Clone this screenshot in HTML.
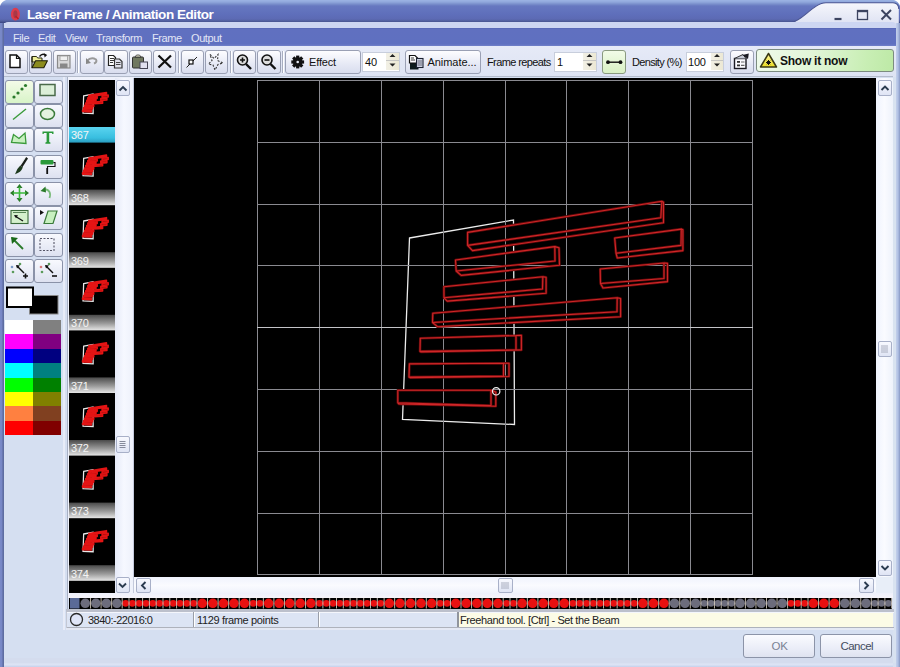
<!DOCTYPE html>
<html><head><meta charset="utf-8">
<style>
*{box-sizing:border-box;margin:0;padding:0}
html,body{width:900px;height:667px;overflow:hidden;background:#d5dff1;font-family:"Liberation Sans",sans-serif;font-size:11px;color:#000}
.a{position:absolute}
.txt{letter-spacing:-0.4px;white-space:nowrap}
.btn{position:absolute;border:1px solid #9aa0b4;border-radius:3px;background:linear-gradient(#fdfdff,#e6e9f5 60%,#d9ddee)}
.sb{position:absolute;border:1px solid #a8b0c8;border-radius:2px;background:linear-gradient(#f8f9ff,#dfe4f4)}
</style></head><body>
<!-- window frame -->
<div class="a" style="left:0;top:0;width:4px;height:667px;background:linear-gradient(90deg,#7a8ac8 0,#7686c6 2px,#5c6a9c 3px,#6070a8 4px)"></div>
<div class="a" style="left:896px;top:22px;width:4px;height:645px;background:linear-gradient(90deg,#c4d0ea 0,#b0c0e4 2px,#8898c4 4px)"></div>
<div class="a" style="left:4px;top:658px;width:889px;height:9px;background:linear-gradient(#d4dcee 0,#d4dcee 5px,#dfe6f6 6px,#d0daf0 8px,#c4cfea 9px)"></div>

<!-- title bar -->
<div class="a" style="left:0;top:0;width:900px;height:23px;background:linear-gradient(#9cb4e4 0,#90a8dc 2px,#7a90cc 4px,#6678c0 6px,#5f6fbb 14px,#5c6ab4 19px,#52609e 21px,#3e4a88 22.5px)"></div>
<svg class="a" style="left:0;top:0" width="900" height="30">
<path d="M0 0 H6 Q1.5 1.5 0 6 Z" fill="#fff"/>
<path d="M894 0 H900 V6 Q898.5 1.5 894 0 Z" fill="#fff"/>
<defs><linearGradient id="tl" x1="0" y1="0" x2="0" y2="1"><stop offset="0" stop-color="#f6f7fc"/><stop offset="1" stop-color="#dfe3f3"/></linearGradient></defs>
<path d="M786 23 L792 22.5 C802 21, 814 2.8, 826 2.8 L893 2.8 Q898.5 3 898.8 9 L898.8 23 Z" fill="url(#tl)"/>
<path d="M786 22.5 L792 22.3 C802 21, 814 2.8, 826 2.8 L893 2.8 Q898.5 3 898.8 9" fill="none" stroke="#4a5592" stroke-width="1.1"/>
<path d="M834.5 19 h7" stroke="#3c4460" stroke-width="2.2"/>
<rect x="857.5" y="10.5" width="10" height="9" fill="none" stroke="#3c4460" stroke-width="1.3"/><path d="M857 11.2h11" stroke="#3c4460" stroke-width="2"/>
<path d="M881.5 10 L891 19.5 M891 10 L881.5 19.5" stroke="#3c4460" stroke-width="2"/>
</svg>
<div class="a txt" style="left:27px;top:7px;font-weight:bold;font-size:13.5px;letter-spacing:-0.45px;color:#fff">Laser Frame / Animation Editor</div>
<svg class="a" style="left:0;top:0" width="30" height="24"><ellipse cx="15.4" cy="14.2" rx="3.3" ry="5.2" fill="#a83848" stroke="#dc3c4c" stroke-width="2.4"/><path d="M15.5 16 l3 3" stroke="#c02020" stroke-width="1.5"/></svg>

<!-- light strip & menu -->
<div class="a" style="left:4px;top:22px;width:892px;height:6px;background:#cdd6f2;border-radius:4px 4px 0 0"></div>
<div class="a" style="left:4px;top:28px;width:892px;height:18px;background:linear-gradient(#5262b0 0,#6070c0 1px,#5f70c0 16px,#7080c8 18px)"></div>
<div class="a txt" style="left:13px;top:32px;color:#e2e6f6">File</div>
<div class="a txt" style="left:38px;top:32px;color:#e2e6f6">Edit</div>
<div class="a txt" style="left:65px;top:32px;color:#e2e6f6">View</div>
<div class="a txt" style="left:96px;top:32px;color:#e2e6f6">Transform</div>
<div class="a txt" style="left:152px;top:32px;color:#e2e6f6">Frame</div>
<div class="a txt" style="left:191px;top:32px;color:#e2e6f6">Output</div>

<!-- toolbar -->
<div class="a" style="left:4px;top:46px;width:892px;height:31px;background:linear-gradient(#e6eaf7,#dde3f3)"></div>


<!-- toolbar buttons -->
<div class="btn" style="left:5px;top:50px;width:23px;height:24px"></div>
<div class="btn" style="left:29px;top:50px;width:23px;height:24px"></div>
<div class="btn" style="left:53px;top:50px;width:23px;height:24px"></div>
<div class="a" style="left:77px;top:51px;width:2px;height:22px;border-left:1px solid #a8aec0;border-right:1px solid #fff"></div>
<div class="btn" style="left:80px;top:50px;width:24px;height:24px"></div>
<div class="btn" style="left:104px;top:50px;width:24px;height:24px"></div>
<div class="btn" style="left:129px;top:50px;width:23px;height:24px"></div>
<div class="btn" style="left:153px;top:50px;width:23px;height:24px"></div>
<div class="a" style="left:178px;top:51px;width:2px;height:22px;border-left:1px solid #a8aec0;border-right:1px solid #fff"></div>
<div class="btn" style="left:181px;top:50px;width:23px;height:24px"></div>
<div class="btn" style="left:205px;top:50px;width:23px;height:24px"></div>
<div class="a" style="left:230px;top:51px;width:2px;height:22px;border-left:1px solid #a8aec0;border-right:1px solid #fff"></div>
<div class="btn" style="left:233px;top:50px;width:23px;height:24px"></div>
<div class="btn" style="left:257px;top:50px;width:24px;height:24px"></div>
<div class="a" style="left:282px;top:51px;width:2px;height:22px;border-left:1px solid #a8aec0;border-right:1px solid #fff"></div>
<div class="btn" style="left:285px;top:50px;width:76px;height:24px"></div>
<svg class="a" style="left:0;top:46px" width="900" height="31">
<!-- new doc -->
<path d="M10 9 h6.5 l3.5 3.5 v9 h-10 z" fill="#fff" stroke="#111" stroke-width="1.5"/>
<path d="M16.5 9 v3.5 h3.5" fill="none" stroke="#111" stroke-width="1.2"/>
<!-- open folder -->
<path d="M32 10.5 h4.5 l1.2 1.5 h4.3 v4 h-10z" fill="#eeee98" stroke="#2a2a10" stroke-width="1"/>
<path d="M32 21.8 l3.6 -7 h11.8 l-3.6 7 z" fill="#8c8c1c" stroke="#1e1e08" stroke-width="1.1" stroke-linejoin="round"/>
<path d="M32 10.5 v11.3" stroke="#1e1e08" stroke-width="1.1"/>
<path d="M39.5 10.5 q2.5 -3.5 6 -1.5" fill="none" stroke="#111" stroke-width="1.3"/><path d="M44 7.2 l3.2 1.8 l-2.6 2.6z" fill="#111"/>
<!-- save grayed -->
<rect x="57.5" y="9.5" width="12.5" height="12.5" fill="#d8d8d8" stroke="#8a8a8a" stroke-width="1.2"/>
<rect x="60" y="10" width="7.5" height="4.5" fill="#f0f0f0" stroke="#999" stroke-width="0.8"/>
<rect x="60" y="17.5" width="7.5" height="4.5" fill="#888"/>
<!-- undo grayed -->
<path d="M87 15 q4 -4.5 9 -1.5 q1.5 2.5 -2 4" fill="none" stroke="#999" stroke-width="2"/><path d="M86 12 l0 6 l5 -1 z" fill="#888"/>
<!-- copy -->
<path d="M108.5 9.5 h5 l2 2 v8 h-7z" fill="#fff" stroke="#222" stroke-width="1.2"/>
<path d="M110 12.5h4M110 14.5h4M110 16.5h3" stroke="#222" stroke-width="0.9"/>
<path d="M114.5 13 h5 l2.5 2.5 v6.5 h-7.5z" fill="#dfe0ea" stroke="#333" stroke-width="1.2"/>
<path d="M116 16.5h4.5M116 18.5h4.5" stroke="#333" stroke-width="0.9"/>
<!-- paste -->
<rect x="132.5" y="11" width="11" height="11" rx="1" fill="#707860" stroke="#333" stroke-width="1"/>
<path d="M135 11 l1.5 -2 h3 l1.5 2z" fill="#e8e8d0" stroke="#333" stroke-width="0.8"/>
<rect x="140" y="16" width="7.5" height="6.5" fill="#e0e0f0" stroke="#445" stroke-width="1"/>
<!-- X -->
<path d="M158.5 9.5 L171 21.5 M171 9.5 L158.5 21.5" stroke="#111" stroke-width="2.2"/>
<!-- node -->
<path d="M186.5 21.5 L197 11" stroke="#222" stroke-width="1"/>
<rect x="189" y="14" width="4" height="4" fill="#fff" stroke="#111" stroke-width="1.2"/>
<!-- star dashed -->
<path d="M210 8.5 l4 4 l4 -4 l-0.5 6 l5.5 2.5 l-5 1.5 l-3 5.5 l-2 -5 l-4.5 -1 l3.5 -3.5 z" fill="none" stroke="#333" stroke-width="1.1" stroke-dasharray="2 1.5"/>
<!-- zoom + -->
<circle cx="242.5" cy="14" r="5" fill="#ddd" stroke="#111" stroke-width="1.6"/>
<path d="M240 14h5M242.5 11.5v5" stroke="#111" stroke-width="1.6"/>
<path d="M246 18 l5 5" stroke="#111" stroke-width="2.4"/>
<!-- zoom - -->
<circle cx="267" cy="14" r="5" fill="#ddd" stroke="#111" stroke-width="1.6"/>
<path d="M264.5 14h5" stroke="#111" stroke-width="1.6"/>
<path d="M270.5 18 l5 5" stroke="#111" stroke-width="2.4"/>
</svg>


<!-- toolbar part 2 -->
<div class="a txt" style="left:309px;top:56px;font-size:11px;letter-spacing:-0.15px;color:#111">Effect</div>
<div class="a" style="left:362px;top:52px;width:38px;height:20px;background:#fff;border:1px solid #c8cedc"></div>
<div class="a txt" style="left:365px;top:56px;font-size:11px;letter-spacing:0;color:#111">40</div>
<div class="a" style="left:386px;top:53px;width:13px;height:17px;background:linear-gradient(90deg,#f2f0e6,#ece8d4)"></div>
<div class="btn" style="left:405px;top:50px;width:76px;height:24px"></div>
<div class="a txt" style="left:427.5px;top:56px;font-size:11px;letter-spacing:-0.05px;color:#111">Animate...</div>
<div class="a txt" style="left:487px;top:56px;font-size:11px;letter-spacing:-0.6px;color:#111">Frame repeats</div>
<div class="a" style="left:554px;top:52px;width:43px;height:20px;background:#fff;border:1px solid #c8cedc"></div>
<div class="a txt" style="left:557px;top:56px;font-size:11px;letter-spacing:0;color:#111">1</div>
<div class="a" style="left:583px;top:53px;width:13px;height:17px;background:linear-gradient(90deg,#f2f0e6,#ece8d4)"></div>
<div class="btn" style="left:602px;top:50px;width:24px;height:24px;border-color:#8a9a80;background:linear-gradient(#f2fbe8,#d8f0c4)"></div>
<div class="a txt" style="left:632px;top:56px;font-size:11px;letter-spacing:-0.65px;color:#111">Density (%)</div>
<div class="a" style="left:686px;top:52px;width:38px;height:20px;background:#fff;border:1px solid #c8cedc"></div>
<div class="a txt" style="left:688px;top:56px;font-size:11px;letter-spacing:-0.2px;color:#111">100</div>
<div class="a" style="left:711px;top:53px;width:12px;height:17px;background:linear-gradient(90deg,#f2f0e6,#ece8d4)"></div>
<div class="btn" style="left:730px;top:50px;width:24px;height:24px"></div>
<div class="btn" style="left:756px;top:49px;width:138px;height:23px;border-color:#7c8c80;background:linear-gradient(100deg,#eefaea 0%,#e2f6d8 40%,#c8eeb4 80%,#bde9a6 100%)"></div>
<div class="a txt" style="left:780px;top:54px;font-size:12px;font-weight:bold;letter-spacing:-0.25px;color:#111">Show it now</div>
<svg class="a" style="left:0;top:46px" width="900" height="31">
<!-- gear -->
<g transform="translate(297.7,16)"><circle r="4.8" fill="#111"/><g fill="#111">
<rect x="-1.6" y="-6.4" width="3.2" height="12.8"/><rect x="-6.4" y="-1.6" width="12.8" height="3.2"/>
<rect x="-1.6" y="-6.4" width="3.2" height="12.8" transform="rotate(45)"/><rect x="-1.6" y="-6.4" width="3.2" height="12.8" transform="rotate(-45)"/></g>
<circle r="1.3" fill="#e8ebf6"/></g>
<!-- spin arrows -->
<path d="M389.5 11 l3 -3 l3 3z M389.5 17.5 l3 3 l3 -3z" fill="#222"/>
<path d="M386 14.5h13" stroke="#bbb" stroke-width="0.8"/>
<path d="M586.5 11 l3 -3 l3 3z M586.5 17.5 l3 3 l3 -3z" fill="#222"/>
<path d="M583 14.5h13" stroke="#bbb" stroke-width="0.8"/>
<path d="M714 11 l3 -3 l3 3z M714 17.5 l3 3 l3 -3z" fill="#222"/>
<path d="M711 14.5h12" stroke="#bbb" stroke-width="0.8"/>
<!-- animate icon -->
<rect x="410" y="15.5" width="8.5" height="8" fill="#0c1a1a"/>
<path d="M409.5 9.5 h5.5 l2.5 2.5 v5 h-8z" fill="#fff" stroke="#111" stroke-width="1.2"/>
<path d="M411 12h3M411 14h4" stroke="#222" stroke-width="0.9"/>
<rect x="416.5" y="12.5" width="6.5" height="9" fill="#d4dae8" stroke="#1a2030" stroke-width="1.1"/>
<path d="M417.5 15h4.5M417.5 17h4.5M417.5 19h4.5" stroke="#445" stroke-width="0.8"/>
<!-- toggle beam -->
<path d="M608 16.2h13" stroke="#111" stroke-width="1.4"/><circle cx="608" cy="16.2" r="1.9" fill="#111"/><circle cx="620.5" cy="16.2" r="1.9" fill="#111"/>
<!-- settings icon -->
<rect x="734.5" y="12.5" width="11.5" height="10" fill="#fbfbff" stroke="#1a1a22" stroke-width="1.4"/>
<path d="M734.5 12.5 L743 8.5 L746 12.5" fill="#c8ccd8" stroke="#333" stroke-width="1"/>
<path d="M742.5 9 L748.8 7.5 L748 13 Z" fill="#1a1a22"/>
<rect x="737" y="15" width="3" height="1.8" fill="#333"/><rect x="737" y="18.5" width="3" height="1.8" fill="#333"/><path d="M741 16h3.5M741 19.4h3.5" stroke="#666" stroke-width="1.2"/>
<!-- warning -->
<defs><linearGradient id="wy" x1="0" y1="0" x2="0" y2="1"><stop offset="0" stop-color="#fff8a0"/><stop offset="1" stop-color="#e8dc20"/></linearGradient></defs>
<path d="M768.5 7.5 L776.5 21 H760.5 Z" fill="url(#wy)" stroke="#3a3a14" stroke-width="1.5" stroke-linejoin="round"/>
<path d="M766 16.5h5M768.5 14v5M766.8 14.8l3.4 3.4M770.2 14.8l-3.4 3.4" stroke="#111" stroke-width="1"/>
</svg>


<!-- left tools panel -->
<div class="a" style="left:4px;top:77px;width:63px;height:553px;background:#d5dff1"></div>
<div class="a" style="left:67px;top:77px;width:1px;height:553px;background:#a8b0c4"></div>
<div class="a" style="left:4px;top:76px;width:889px;height:1px;background:#b4bccc"></div>
<div class="a" style="left:63px;top:77px;width:2px;height:553px;background:#e8ecf8"></div>
<div class="a" style="left:5px;top:79.5px;width:29px;height:24.5px;border:1px solid #8a92a8;border-radius:3px;background:linear-gradient(#f4fbe8,#d8f4c8)"></div>
<div class="a" style="left:34px;top:79.5px;width:29px;height:24.5px;border:1px solid #8a92a8;border-radius:3px;background:linear-gradient(#f8f9fe,#e8ebf6 60%,#dde1f0)"></div>
<div class="a" style="left:5px;top:103.5px;width:29px;height:24.5px;border:1px solid #8a92a8;border-radius:3px;background:linear-gradient(#f8f9fe,#e8ebf6 60%,#dde1f0)"></div>
<div class="a" style="left:34px;top:103.5px;width:29px;height:24.5px;border:1px solid #8a92a8;border-radius:3px;background:linear-gradient(#f8f9fe,#e8ebf6 60%,#dde1f0)"></div>
<div class="a" style="left:5px;top:127.5px;width:29px;height:24px;border:1px solid #8a92a8;border-radius:3px;background:linear-gradient(#f8f9fe,#e8ebf6 60%,#dde1f0)"></div>
<div class="a" style="left:34px;top:127.5px;width:29px;height:24px;border:1px solid #8a92a8;border-radius:3px;background:linear-gradient(#f8f9fe,#e8ebf6 60%,#dde1f0)"></div>
<div class="a" style="left:5px;top:155px;width:29px;height:24px;border:1px solid #8a92a8;border-radius:3px;background:linear-gradient(#f8f9fe,#e8ebf6 60%,#dde1f0)"></div>
<div class="a" style="left:34px;top:155px;width:29px;height:24px;border:1px solid #8a92a8;border-radius:3px;background:linear-gradient(#f8f9fe,#e8ebf6 60%,#dde1f0)"></div>
<div class="a" style="left:5px;top:181.5px;width:29px;height:24px;border:1px solid #8a92a8;border-radius:3px;background:linear-gradient(#f8f9fe,#e8ebf6 60%,#dde1f0)"></div>
<div class="a" style="left:34px;top:181.5px;width:29px;height:24px;border:1px solid #8a92a8;border-radius:3px;background:linear-gradient(#f8f9fe,#e8ebf6 60%,#dde1f0)"></div>
<div class="a" style="left:5px;top:206px;width:29px;height:24px;border:1px solid #8a92a8;border-radius:3px;background:linear-gradient(#f8f9fe,#e8ebf6 60%,#dde1f0)"></div>
<div class="a" style="left:34px;top:206px;width:29px;height:24px;border:1px solid #8a92a8;border-radius:3px;background:linear-gradient(#f8f9fe,#e8ebf6 60%,#dde1f0)"></div>
<div class="a" style="left:5px;top:233px;width:29px;height:24px;border:1px solid #8a92a8;border-radius:3px;background:linear-gradient(#f8f9fe,#e8ebf6 60%,#dde1f0)"></div>
<div class="a" style="left:34px;top:233px;width:29px;height:24px;border:1px solid #8a92a8;border-radius:3px;background:linear-gradient(#f8f9fe,#e8ebf6 60%,#dde1f0)"></div>
<div class="a" style="left:5px;top:259px;width:29px;height:24px;border:1px solid #8a92a8;border-radius:3px;background:linear-gradient(#f8f9fe,#e8ebf6 60%,#dde1f0)"></div>
<div class="a" style="left:34px;top:259px;width:29px;height:24px;border:1px solid #8a92a8;border-radius:3px;background:linear-gradient(#f8f9fe,#e8ebf6 60%,#dde1f0)"></div>

<svg class="a" style="left:0;top:0" width="70" height="440">
<!-- dotted line -->
<g fill="#2a7a2a"><circle cx="14" cy="97" r="1.6"/><circle cx="18" cy="93" r="1.6"/><circle cx="22" cy="89" r="1.6"/><circle cx="25.5" cy="85.5" r="1.6"/></g>
<!-- rect -->
<rect x="40" y="84.5" width="15" height="11" fill="#dcefd8" stroke="#4a6a4a" stroke-width="1.5"/>
<!-- line -->
<path d="M13 119.5 L26 109" stroke="#3a9a3a" stroke-width="1.4"/>
<!-- ellipse -->
<ellipse cx="47.5" cy="114" rx="7" ry="5.5" fill="#e4f2e0" stroke="#3a7a3a" stroke-width="1.5"/>
<!-- polygon -->
<path d="M11.5 142.5 L13.5 134.5 L19 138.5 L25 133 L26 143.5 Z" fill="#c8f0c0" stroke="#3a9a3a" stroke-width="1.3"/>
<!-- T -->
<path d="M42.5 131.5 h11 v2.5 h-1.2 l-0.5 -1 h-2.6 v9 l1.2 0.5 v1.2 h-5 v-1.2 l1.2 -0.5 v-9 h-2.6 l-0.5 1 h-1z" fill="#2a9a3a"/>
<!-- brush -->
<path d="M26.2 157 L28 158.6 L22.4 167.2 L20.6 165.8 Z" fill="#1a1f1a"/>
<path d="M24.5 158.5 L22 162.5" stroke="#dfe6df" stroke-width="0.6"/>
<path d="M20.3 165.6 L22.8 167.6 Q21 172.5 15 174.3 Q16.8 168.6 20.3 165.6 Z" fill="#1e3a1e"/>
<!-- roller -->
<rect x="40.5" y="160" width="13" height="4.5" rx="1" fill="#2a9a3a"/>
<path d="M53.5 162.5 h1.5 v4 h-7.5 v2" fill="none" stroke="#111" stroke-width="1.1"/>
<path d="M47.2 168 v6" stroke="#111" stroke-width="1.8"/>
<!-- move -->
<g fill="#2a7a2a"><path d="M19.5 184 l3 4 h-6z M19.5 202 l3 -4 h-6z M10 193 l4 -3 v6z M29 193 l-4 -3 v6z"/></g>
<path d="M19.5 187v12M13 193h13" stroke="#3aba3a" stroke-width="1.6"/>
<!-- rotate -->
<path d="M49.5 198 Q52 190 44 189" fill="none" stroke="#7aba7a" stroke-width="1.8"/>
<path d="M40.5 191 l5 -4.5 l0.5 6z" fill="#2a7a2a"/>
<!-- screen arrow -->
<rect x="11" y="210.5" width="17" height="13" fill="#d4f0cc" stroke="#3a6a3a" stroke-width="1.1"/>
<path d="M13 212.5h13" stroke="#3a6a3a" stroke-width="0.8"/>
<path d="M15 216 l8 5" stroke="#111" stroke-width="1.4"/><path d="M14 215 l4 0.2 l-2 3z" fill="#111"/>
<!-- parallelogram -->
<path d="M44 223.5 L48 211 H57 L53 223.5 Z" fill="#c8f0c0" stroke="#3a7a3a" stroke-width="1.2"/>
<path d="M40 210 l4 2.5 l-4 2.5z" fill="#111"/>
<!-- arrow select -->
<path d="M12 238 l11 11" stroke="#2a7a2a" stroke-width="1.8"/><path d="M11 237 l7 1 l-6 6z" fill="#1a6a1a"/>
<!-- dashed rect -->
<rect x="40" y="238.5" width="14" height="12" fill="none" stroke="#556" stroke-width="1.1" stroke-dasharray="2 1.5"/>
<!-- add point -->
<circle cx="12" cy="267" r="1.3" fill="#7a9ac8"/><circle cx="20" cy="264" r="1.3" fill="#5a9a5a"/><circle cx="13" cy="272" r="1.3" fill="#5a9a5a"/>
<path d="M17 266 l7 7" stroke="#111" stroke-width="1.4"/><path d="M16 265 l4 0.5 l-3 3z" fill="#111"/>
<path d="M23 276h5M25.5 273.5v5" stroke="#111" stroke-width="1.6"/>
<!-- remove point -->
<circle cx="41" cy="267" r="1.3" fill="#d87a7a"/><circle cx="49" cy="264" r="1.3" fill="#5a9a5a"/><circle cx="42" cy="272" r="1.3" fill="#5a9a5a"/>
<path d="M46 266 l7 7" stroke="#111" stroke-width="1.4"/><path d="M45 265 l4 0.5 l-3 3z" fill="#111"/>
<path d="M52 276h5" stroke="#111" stroke-width="1.6"/>
<!-- fg/bg colors -->
<rect x="29.5" y="295.5" width="28.5" height="18.5" fill="#000" stroke="#888" stroke-width="1"/>
<rect x="7" y="287.5" width="26" height="19.5" fill="#fff" stroke="#000" stroke-width="2"/>
</svg>
<div class="a" style="left:5px;top:320.0px;width:28px;height:14.5px;background:#ffffff"></div><div class="a" style="left:33px;top:320.0px;width:28px;height:14.5px;background:#808080"></div>
<div class="a" style="left:5px;top:334.4px;width:28px;height:14.5px;background:#ff00ff"></div><div class="a" style="left:33px;top:334.4px;width:28px;height:14.5px;background:#800080"></div>
<div class="a" style="left:5px;top:348.8px;width:28px;height:14.5px;background:#0000ff"></div><div class="a" style="left:33px;top:348.8px;width:28px;height:14.5px;background:#000080"></div>
<div class="a" style="left:5px;top:363.2px;width:28px;height:14.5px;background:#00ffff"></div><div class="a" style="left:33px;top:363.2px;width:28px;height:14.5px;background:#008080"></div>
<div class="a" style="left:5px;top:377.6px;width:28px;height:14.5px;background:#00ff00"></div><div class="a" style="left:33px;top:377.6px;width:28px;height:14.5px;background:#008000"></div>
<div class="a" style="left:5px;top:392.0px;width:28px;height:14.5px;background:#ffff00"></div><div class="a" style="left:33px;top:392.0px;width:28px;height:14.5px;background:#808000"></div>
<div class="a" style="left:5px;top:406.4px;width:28px;height:14.5px;background:#ff8040"></div><div class="a" style="left:33px;top:406.4px;width:28px;height:14.5px;background:#804020"></div>
<div class="a" style="left:5px;top:420.8px;width:28px;height:14.5px;background:#ff0000"></div><div class="a" style="left:33px;top:420.8px;width:28px;height:14.5px;background:#800000"></div>


<!-- thumbnails -->
<div class="a" style="left:68px;top:77px;width:66px;height:517px;background:#eef1fb"></div>
<div class="a" style="left:68.5px;top:80px;width:46.5px;height:513px;background:#000;overflow:hidden">
<svg width="46" height="513" style="position:absolute;left:0;top:0">
<defs>
<linearGradient id="lg" x1="0" y1="0" x2="0" y2="1"><stop offset="0" stop-color="#4a4a4a"/><stop offset="0.55" stop-color="#9a9a9a"/><stop offset="1" stop-color="#e6e6e6"/></linearGradient>
<linearGradient id="lc" x1="0" y1="0" x2="0" y2="1"><stop offset="0" stop-color="#5ad4f0"/><stop offset="0.7" stop-color="#38bedf"/><stop offset="1" stop-color="#2a9cc0"/></linearGradient>
<g id="tp"><g transform="matrix(0.09,0,0,0.095,-22.2,-53.8)"><path d="M409.5 238 L513.5 220 L515 424.5 L402.5 419.5 Z" fill="none" stroke="#e8e8e8" stroke-width="14"/><g fill="#7a0a0a" stroke="#e41414" stroke-width="17" stroke-linejoin="round"><path d="M467.4 233 L663 203 L663 220 L467.4 248.6 Z"/><path d="M455.5 259.4 L560 246.8 L560 264.7 L455.5 275.5 Z"/><path d="M614.5 236 L682 229.5 L682 250 L614.5 257.5 Z"/><path d="M443.7 286.3 L546.5 276.3 L546.5 291.7 L443.7 301.8 Z"/><path d="M600 266.5 L667.8 263 L667.8 282 L600 288 Z"/><path d="M431.4 313.3 L620 297 L620 315.8 L431.4 326.6 Z"/><path d="M419.6 338.5 L521.4 335 L521.4 350.4 L419.6 352.9 Z"/><path d="M408 363.7 L508.8 362.6 L508.8 377 L408 378 Z"/><path d="M397 389.6 L495.8 391.4 L495.8 406.8 L397 403.2 Z"/></g></g></g>
</defs>
<use href="#tp" transform="translate(0,47.0)"/>
<rect x="0" y="47.0" width="46" height="15.6" fill="url(#lc)"/>
<text x="2" y="59.3" font-family="Liberation Sans" font-size="11" letter-spacing="-0.3" fill="#f4f4f4">367</text>
<use href="#tp" transform="translate(0,109.6)"/>
<rect x="0" y="109.6" width="46" height="15.6" fill="url(#lg)"/>
<text x="2" y="121.9" font-family="Liberation Sans" font-size="11" letter-spacing="-0.3" fill="#f4f4f4">368</text>
<use href="#tp" transform="translate(0,172.2)"/>
<rect x="0" y="172.2" width="46" height="15.6" fill="url(#lg)"/>
<text x="2" y="184.5" font-family="Liberation Sans" font-size="11" letter-spacing="-0.3" fill="#f4f4f4">369</text>
<use href="#tp" transform="translate(0,234.8)"/>
<rect x="0" y="234.8" width="46" height="15.6" fill="url(#lg)"/>
<text x="2" y="247.1" font-family="Liberation Sans" font-size="11" letter-spacing="-0.3" fill="#f4f4f4">370</text>
<use href="#tp" transform="translate(0,297.4)"/>
<rect x="0" y="297.4" width="46" height="15.6" fill="url(#lg)"/>
<text x="2" y="309.7" font-family="Liberation Sans" font-size="11" letter-spacing="-0.3" fill="#f4f4f4">371</text>
<use href="#tp" transform="translate(0,360.0)"/>
<rect x="0" y="360.0" width="46" height="15.6" fill="url(#lg)"/>
<text x="2" y="372.3" font-family="Liberation Sans" font-size="11" letter-spacing="-0.3" fill="#f4f4f4">372</text>
<use href="#tp" transform="translate(0,422.6)"/>
<rect x="0" y="422.6" width="46" height="15.6" fill="url(#lg)"/>
<text x="2" y="434.9" font-family="Liberation Sans" font-size="11" letter-spacing="-0.3" fill="#f4f4f4">373</text>
<use href="#tp" transform="translate(0,485.2)"/>
<rect x="0" y="485.2" width="46" height="15.6" fill="url(#lg)"/>
<text x="2" y="497.5" font-family="Liberation Sans" font-size="11" letter-spacing="-0.3" fill="#f4f4f4">374</text>

</svg></div>
<!-- thumb scrollbar -->
<div class="a" style="left:115px;top:78px;width:18px;height:516px;background:linear-gradient(90deg,#e6eaf8,#f6f8ff 50%,#eef1fb)"></div>
<div class="a" style="left:133px;top:78px;width:1px;height:516px;background:#c4cadc"></div>
<div class="sb" style="left:116px;top:80px;width:14px;height:16px"></div>
<div class="sb" style="left:116px;top:577px;width:14px;height:16px"></div>
<div class="sb" style="left:115.5px;top:436px;width:14px;height:17px"></div>
<svg class="a" style="left:0;top:0" width="140" height="600">
<path d="M119.5 90.5 l3.5 -3.5 l3.5 3.5" fill="none" stroke="#2c3c50" stroke-width="1.9"/>
<path d="M119 583.5 l3.5 3.5 l3.5 -3.5" fill="none" stroke="#2c3c50" stroke-width="1.9"/>
<path d="M119.5 441.5h6M119.5 443.5h6M119.5 445.5h6M119.5 447.5h6" stroke="#7a7f90" stroke-width="0.9"/>
</svg>

<!-- canvas -->
<div class="a" style="left:134px;top:78px;width:742px;height:499px;background:#000"></div>
<svg class="a" style="left:0;top:0" width="900" height="667">
<g stroke="#8a8a90" stroke-width="1" fill="none">
<path d="M257.5 80 V575"/><path d="M257 80.5 H753"/><path d="M319.5 80 V575"/><path d="M257 142.5 H753"/><path d="M381.5 80 V575"/><path d="M257 204.5 H753"/><path d="M443.5 80 V575"/><path d="M257 265.5 H753"/><path d="M505.5 80 V575"/><path d="M566.5 80 V575"/><path d="M257 389.5 H753"/><path d="M628.5 80 V575"/><path d="M257 451.5 H753"/><path d="M690.5 80 V575"/><path d="M257 513.5 H753"/><path d="M752.5 80 V575"/><path d="M257 574.5 H753"/><path d="M257 327.5 H753" stroke="#c4c4c8"/></g>
<path d="M409.5 238 L513.5 220 L514.5 424.5 L402.5 419.5 Z" fill="none" stroke="#ececec" stroke-width="1.3"/>
<g fill="#000"><path d="M467.6 232.4 L661.9 201.3 L663.5 202.2 L663.5 222.8 L472.5 250.6 L467.6 245.4 Z"/><path d="M455.5 260 L554.8 246.6 L559 247.8 L559.5 265.2 L461.2 275.4 L456.2 271 Z"/><path d="M614.7 238 L681.3 229.1 L682.9 229.8 L682.9 250.6 L617.3 258 L616 253.2 Z"/><path d="M443.9 286.7 L542.8 276.7 L546.1 277.2 L546.1 293.3 L447.2 301.1 L444 297.8 Z"/><path d="M600.2 269 L664 263 L667.5 263.4 L667.5 281.6 L603 288 L600.5 283.5 Z"/><path d="M432.8 313.3 L617.2 297.8 L620.6 298.5 L620.6 316.7 L437.5 326.7 L432.5 322.5 Z"/><path d="M420.3 338.2 L516 335.5 L521.4 335.3 L521.4 349.9 L421 352 L420 351.4 Z"/><path d="M409.4 363.9 L503.5 363.2 L509 363.3 L509 376.5 L410 377.6 L409 377.1 Z"/><path d="M397.8 390.2 L491 390.3 L495.8 392 L495.8 406.2 L399 404 L397.8 402.8 Z"/></g>
<g stroke="#8a8a90" stroke-width="1" fill="none">
<path d="M257.5 80 V575"/><path d="M257 80.5 H753"/><path d="M319.5 80 V575"/><path d="M257 142.5 H753"/><path d="M381.5 80 V575"/><path d="M257 204.5 H753"/><path d="M443.5 80 V575"/><path d="M257 265.5 H753"/><path d="M505.5 80 V575"/><path d="M566.5 80 V575"/><path d="M257 389.5 H753"/><path d="M628.5 80 V575"/><path d="M257 451.5 H753"/><path d="M690.5 80 V575"/><path d="M257 513.5 H753"/><path d="M752.5 80 V575"/><path d="M257 574.5 H753"/><path d="M257 327.5 H753" stroke="#c4c4c8"/></g>
<g fill="none" stroke="#600a0a" stroke-width="2.6" stroke-linejoin="round">
<path d="M467.6 232.4 L661.9 201.3 L660.8 217.8 L467.6 245.4 Z M661.9 201.3 L663.5 202.2 L663.5 222.8 L472.5 250.6 L467.6 245.4"/>
<path d="M455.5 260 L554.8 246.6 L555 261 L456.2 271 Z M554.8 246.6 L559 247.8 L559.5 265.2 L461.2 275.4 L456.2 271"/>
<path d="M614.7 238 L681.3 229.1 L681 245.4 L616 253.2 Z M681.3 229.1 L682.9 229.8 L682.9 250.6 L617.3 258 L616 253.2"/>
<path d="M443.9 286.7 L542.8 276.7 L542.5 289 L444 297.8 Z M542.8 276.7 L546.1 277.2 L546.1 293.3 L447.2 301.1 L444 297.8"/>
<path d="M600.2 269 L664 263 L664 278.5 L600.5 283.5 Z M664 263 L667.5 263.4 L667.5 281.6 L603 288 L600.5 283.5"/>
<path d="M432.8 313.3 L617.2 297.8 L617 311.8 L432.5 322.5 Z M617.2 297.8 L620.6 298.5 L620.6 316.7 L437.5 326.7 L432.5 322.5"/>
<path d="M420.3 338.2 L516 335.5 L516 350 L420 351.4 Z M516 335.5 L521.4 335.3 L521.4 349.9 L421 352 L420 351.4"/>
<path d="M409.4 363.9 L503.5 363.2 L503.5 376 L409 377.1 Z M503.5 363.2 L509 363.3 L509 376.5 L410 377.6 L409 377.1"/>
<path d="M397.8 390.2 L491 390.3 L491 405.6 L397.8 402.8 Z M491 390.3 L495.8 392 L495.8 406.2 L399 404 L397.8 402.8"/>
</g>
<g fill="none" stroke="#d02628" stroke-width="1.1" stroke-linejoin="round">
<path d="M467.6 232.4 L661.9 201.3 L660.8 217.8 L467.6 245.4 Z M661.9 201.3 L663.5 202.2 L663.5 222.8 L472.5 250.6 L467.6 245.4"/>
<path d="M455.5 260 L554.8 246.6 L555 261 L456.2 271 Z M554.8 246.6 L559 247.8 L559.5 265.2 L461.2 275.4 L456.2 271"/>
<path d="M614.7 238 L681.3 229.1 L681 245.4 L616 253.2 Z M681.3 229.1 L682.9 229.8 L682.9 250.6 L617.3 258 L616 253.2"/>
<path d="M443.9 286.7 L542.8 276.7 L542.5 289 L444 297.8 Z M542.8 276.7 L546.1 277.2 L546.1 293.3 L447.2 301.1 L444 297.8"/>
<path d="M600.2 269 L664 263 L664 278.5 L600.5 283.5 Z M664 263 L667.5 263.4 L667.5 281.6 L603 288 L600.5 283.5"/>
<path d="M432.8 313.3 L617.2 297.8 L617 311.8 L432.5 322.5 Z M617.2 297.8 L620.6 298.5 L620.6 316.7 L437.5 326.7 L432.5 322.5"/>
<path d="M420.3 338.2 L516 335.5 L516 350 L420 351.4 Z M516 335.5 L521.4 335.3 L521.4 349.9 L421 352 L420 351.4"/>
<path d="M409.4 363.9 L503.5 363.2 L503.5 376 L409 377.1 Z M503.5 363.2 L509 363.3 L509 376.5 L410 377.6 L409 377.1"/>
<path d="M397.8 390.2 L491 390.3 L491 405.6 L397.8 402.8 Z M491 390.3 L495.8 392 L495.8 406.2 L399 404 L397.8 402.8"/>
</g>
<circle cx="496.2" cy="391.3" r="3.7" fill="none" stroke="#f0f0f0" stroke-width="1.2"/>
</svg>


<!-- right scrollbar -->
<div class="a" style="left:876px;top:78px;width:17px;height:499px;background:linear-gradient(90deg,#f0f4fe,#fafbff 50%,#eef2fb)"></div>
<div class="a" style="left:893px;top:77px;width:3px;height:586px;background:#d8e2f0"></div>
<div class="sb" style="left:878px;top:80px;width:14px;height:16px"></div>
<div class="sb" style="left:878px;top:560px;width:14px;height:16px"></div>
<div class="sb" style="left:877.5px;top:341px;width:14px;height:16px"></div>
<!-- h scrollbar -->
<div class="a" style="left:134px;top:577px;width:742px;height:17px;background:linear-gradient(#f0f3fd,#fafbff 50%,#eef1fb)"></div>
<div class="a" style="left:876px;top:577px;width:17px;height:17px;background:#e8eef8"></div>
<div class="sb" style="left:135.5px;top:578px;width:15px;height:15px"></div>
<div class="sb" style="left:859px;top:578px;width:15px;height:15px"></div>
<div class="sb" style="left:497.5px;top:577.5px;width:15px;height:15.5px"></div>
<svg class="a" style="left:0;top:0" width="900" height="667">
<path d="M881.5 90 l3.5 -3.5 l3.5 3.5" fill="none" stroke="#2c3c50" stroke-width="1.9"/>
<path d="M881.5 566 l3.5 3.5 l3.5 -3.5" fill="none" stroke="#2c3c50" stroke-width="1.9"/>
<path d="M881 346h7M881 348h7M881 350h7M881 352h7" stroke="#9a9fb0" stroke-width="0.8"/>
<path d="M145.5 582 l-3.5 3.5 l3.5 3.5" fill="none" stroke="#2c3c50" stroke-width="1.9"/>
<path d="M864.5 582 l3.5 3.5 l-3.5 3.5" fill="none" stroke="#2c3c50" stroke-width="1.9"/>
<path d="M502 582v7M504 582v7M506 582v7M508 582v7" stroke="#9a9fb0" stroke-width="0.8"/>
</svg>
<!-- frame strip -->
<div class="a" style="left:68px;top:593px;width:825px;height:5px;background:linear-gradient(#eef0fb,#f6f4fa)"></div>
<div class="a" style="left:69px;top:597.5px;width:823px;height:11.5px;background:#000"></div>
<svg class="a" style="left:0;top:0" width="900" height="667" id="strip">
<rect x="70" y="598" width="9.5" height="10.5" fill="#5a6a98"/>
<circle cx="85.28" cy="603.3" r="4.8" fill="#6c6c7c"/>
<circle cx="95.83" cy="603.3" r="4.8" fill="#6c6c7c"/>
<circle cx="106.38" cy="603.3" r="4.8" fill="#6c6c7c"/>
<circle cx="116.92" cy="603.3" r="4.8" fill="#6c6c7c"/>
<circle cx="125.60" cy="603.3" r="3.4" fill="#e81010"/>
<circle cx="132.40" cy="603.3" r="3.4" fill="#e81010"/>
<circle cx="139.20" cy="603.3" r="3.4" fill="#e81010"/>
<circle cx="146.00" cy="603.3" r="3.4" fill="#e81010"/>
<circle cx="152.80" cy="603.3" r="3.4" fill="#e81010"/>
<circle cx="159.60" cy="603.3" r="3.4" fill="#e81010"/>
<circle cx="166.40" cy="603.3" r="3.4" fill="#e81010"/>
<circle cx="173.20" cy="603.3" r="3.4" fill="#e81010"/>
<circle cx="180.00" cy="603.3" r="3.4" fill="#e81010"/>
<circle cx="186.80" cy="603.3" r="3.4" fill="#e81010"/>
<circle cx="193.60" cy="603.3" r="3.4" fill="#e81010"/>
<circle cx="202.28" cy="603.3" r="4.8" fill="#e81010"/>
<circle cx="212.83" cy="603.3" r="4.8" fill="#e81010"/>
<circle cx="223.38" cy="603.3" r="4.8" fill="#e81010"/>
<circle cx="233.93" cy="603.3" r="4.8" fill="#e81010"/>
<circle cx="244.48" cy="603.3" r="4.8" fill="#e81010"/>
<circle cx="253.15" cy="603.3" r="3.4" fill="#e81010"/>
<circle cx="259.95" cy="603.3" r="3.4" fill="#e81010"/>
<circle cx="268.63" cy="603.3" r="4.8" fill="#e81010"/>
<circle cx="279.18" cy="603.3" r="4.8" fill="#e81010"/>
<circle cx="289.73" cy="603.3" r="4.8" fill="#e81010"/>
<circle cx="300.28" cy="603.3" r="4.8" fill="#e81010"/>
<circle cx="310.83" cy="603.3" r="4.8" fill="#e81010"/>
<circle cx="319.50" cy="603.3" r="3.4" fill="#e81010"/>
<circle cx="326.30" cy="603.3" r="3.4" fill="#e81010"/>
<circle cx="333.10" cy="603.3" r="3.4" fill="#e81010"/>
<circle cx="339.90" cy="603.3" r="3.4" fill="#e81010"/>
<circle cx="346.70" cy="603.3" r="3.4" fill="#e81010"/>
<circle cx="353.50" cy="603.3" r="3.4" fill="#e81010"/>
<circle cx="360.30" cy="603.3" r="3.4" fill="#e81010"/>
<circle cx="367.10" cy="603.3" r="3.4" fill="#e81010"/>
<circle cx="373.90" cy="603.3" r="3.4" fill="#e81010"/>
<circle cx="380.70" cy="603.3" r="3.4" fill="#e81010"/>
<circle cx="389.38" cy="603.3" r="4.8" fill="#e81010"/>
<circle cx="399.93" cy="603.3" r="4.8" fill="#e81010"/>
<circle cx="410.48" cy="603.3" r="4.8" fill="#e81010"/>
<circle cx="421.03" cy="603.3" r="4.8" fill="#e81010"/>
<circle cx="431.58" cy="603.3" r="4.8" fill="#e81010"/>
<circle cx="440.25" cy="603.3" r="3.4" fill="#e81010"/>
<circle cx="447.05" cy="603.3" r="3.4" fill="#e81010"/>
<circle cx="455.73" cy="603.3" r="4.8" fill="#e81010"/>
<circle cx="466.28" cy="603.3" r="4.8" fill="#e81010"/>
<circle cx="476.83" cy="603.3" r="4.8" fill="#e81010"/>
<circle cx="487.38" cy="603.3" r="4.8" fill="#e81010"/>
<circle cx="497.93" cy="603.3" r="4.8" fill="#e81010"/>
<circle cx="506.60" cy="603.3" r="3.4" fill="#e81010"/>
<circle cx="513.40" cy="603.3" r="3.4" fill="#e81010"/>
<circle cx="522.08" cy="603.3" r="4.8" fill="#e81010"/>
<circle cx="532.63" cy="603.3" r="4.8" fill="#e81010"/>
<circle cx="543.18" cy="603.3" r="4.8" fill="#e81010"/>
<circle cx="553.73" cy="603.3" r="4.8" fill="#e81010"/>
<circle cx="564.28" cy="603.3" r="4.8" fill="#e81010"/>
<circle cx="572.95" cy="603.3" r="3.4" fill="#e81010"/>
<circle cx="579.75" cy="603.3" r="3.4" fill="#e81010"/>
<circle cx="586.55" cy="603.3" r="3.4" fill="#e81010"/>
<circle cx="593.35" cy="603.3" r="3.4" fill="#e81010"/>
<circle cx="600.15" cy="603.3" r="3.4" fill="#e81010"/>
<circle cx="606.95" cy="603.3" r="3.4" fill="#e81010"/>
<circle cx="613.75" cy="603.3" r="3.4" fill="#e81010"/>
<circle cx="620.55" cy="603.3" r="3.4" fill="#e81010"/>
<circle cx="627.35" cy="603.3" r="3.4" fill="#e81010"/>
<circle cx="634.15" cy="603.3" r="3.4" fill="#e81010"/>
<circle cx="642.82" cy="603.3" r="4.8" fill="#e81010"/>
<circle cx="653.37" cy="603.3" r="4.8" fill="#e81010"/>
<circle cx="663.92" cy="603.3" r="4.8" fill="#e81010"/>
<circle cx="674.47" cy="603.3" r="4.8" fill="#6c6c7c"/>
<circle cx="685.02" cy="603.3" r="4.8" fill="#6c6c7c"/>
<circle cx="695.57" cy="603.3" r="4.8" fill="#6c6c7c"/>
<circle cx="704.25" cy="603.3" r="3.4" fill="#6c6c7c"/>
<circle cx="711.05" cy="603.3" r="3.4" fill="#6c6c7c"/>
<circle cx="717.85" cy="603.3" r="3.4" fill="#6c6c7c"/>
<circle cx="724.65" cy="603.3" r="3.4" fill="#6c6c7c"/>
<circle cx="731.45" cy="603.3" r="3.4" fill="#6c6c7c"/>
<circle cx="740.12" cy="603.3" r="4.8" fill="#6c6c7c"/>
<circle cx="750.67" cy="603.3" r="4.8" fill="#6c6c7c"/>
<circle cx="761.22" cy="603.3" r="4.8" fill="#6c6c7c"/>
<circle cx="771.77" cy="603.3" r="4.8" fill="#6c6c7c"/>
<circle cx="782.32" cy="603.3" r="4.8" fill="#6c6c7c"/>
<circle cx="791.00" cy="603.3" r="3.4" fill="#e81010"/>
<circle cx="797.80" cy="603.3" r="3.4" fill="#e81010"/>
<circle cx="804.60" cy="603.3" r="3.4" fill="#e81010"/>
<circle cx="813.27" cy="603.3" r="4.8" fill="#e81010"/>
<circle cx="823.82" cy="603.3" r="4.8" fill="#e81010"/>
<circle cx="834.37" cy="603.3" r="4.8" fill="#e81010"/>
<circle cx="844.92" cy="603.3" r="4.8" fill="#6c6c7c"/>
<circle cx="855.47" cy="603.3" r="4.8" fill="#6c6c7c"/>
<circle cx="866.02" cy="603.3" r="4.8" fill="#6c6c7c"/>
<circle cx="874.70" cy="603.3" r="3.4" fill="#6c6c7c"/>
<circle cx="881.50" cy="603.3" r="3.4" fill="#6c6c7c"/>
<circle cx="888.30" cy="603.3" r="3.4" fill="#6c6c7c"/>
<g stroke="#efe4d8" stroke-width="0.8"><path d="M90.55 598v10.5"/><path d="M101.10 598v10.5"/><path d="M111.65 598v10.5"/><path d="M122.20 598v10.5"/><path d="M129.00 598v10.5"/><path d="M135.80 598v10.5"/><path d="M142.60 598v10.5"/><path d="M149.40 598v10.5"/><path d="M156.20 598v10.5"/><path d="M163.00 598v10.5"/><path d="M169.80 598v10.5"/><path d="M176.60 598v10.5"/><path d="M183.40 598v10.5"/><path d="M190.20 598v10.5"/><path d="M197.00 598v10.5"/><path d="M207.55 598v10.5"/><path d="M218.10 598v10.5"/><path d="M228.65 598v10.5"/><path d="M239.20 598v10.5"/><path d="M249.75 598v10.5"/><path d="M256.55 598v10.5"/><path d="M263.35 598v10.5"/><path d="M273.90 598v10.5"/><path d="M284.45 598v10.5"/><path d="M295.00 598v10.5"/><path d="M305.55 598v10.5"/><path d="M316.10 598v10.5"/><path d="M322.90 598v10.5"/><path d="M329.70 598v10.5"/><path d="M336.50 598v10.5"/><path d="M343.30 598v10.5"/><path d="M350.10 598v10.5"/><path d="M356.90 598v10.5"/><path d="M363.70 598v10.5"/><path d="M370.50 598v10.5"/><path d="M377.30 598v10.5"/><path d="M384.10 598v10.5"/><path d="M394.65 598v10.5"/><path d="M405.20 598v10.5"/><path d="M415.75 598v10.5"/><path d="M426.30 598v10.5"/><path d="M436.85 598v10.5"/><path d="M443.65 598v10.5"/><path d="M450.45 598v10.5"/><path d="M461.00 598v10.5"/><path d="M471.55 598v10.5"/><path d="M482.10 598v10.5"/><path d="M492.65 598v10.5"/><path d="M503.20 598v10.5"/><path d="M510.00 598v10.5"/><path d="M516.80 598v10.5"/><path d="M527.35 598v10.5"/><path d="M537.90 598v10.5"/><path d="M548.45 598v10.5"/><path d="M559.00 598v10.5"/><path d="M569.55 598v10.5"/><path d="M576.35 598v10.5"/><path d="M583.15 598v10.5"/><path d="M589.95 598v10.5"/><path d="M596.75 598v10.5"/><path d="M603.55 598v10.5"/><path d="M610.35 598v10.5"/><path d="M617.15 598v10.5"/><path d="M623.95 598v10.5"/><path d="M630.75 598v10.5"/><path d="M637.55 598v10.5"/><path d="M648.10 598v10.5"/><path d="M658.65 598v10.5"/><path d="M669.20 598v10.5"/><path d="M679.75 598v10.5"/><path d="M690.30 598v10.5"/><path d="M700.85 598v10.5"/><path d="M707.65 598v10.5"/><path d="M714.45 598v10.5"/><path d="M721.25 598v10.5"/><path d="M728.05 598v10.5"/><path d="M734.85 598v10.5"/><path d="M745.40 598v10.5"/><path d="M755.95 598v10.5"/><path d="M766.50 598v10.5"/><path d="M777.05 598v10.5"/><path d="M787.60 598v10.5"/><path d="M794.40 598v10.5"/><path d="M801.20 598v10.5"/><path d="M808.00 598v10.5"/><path d="M818.55 598v10.5"/><path d="M829.10 598v10.5"/><path d="M839.65 598v10.5"/><path d="M850.20 598v10.5"/><path d="M860.75 598v10.5"/><path d="M871.30 598v10.5"/><path d="M878.10 598v10.5"/><path d="M884.90 598v10.5"/><path d="M891.70 598v10.5"/></g>
</svg>
<!-- status bar -->
<div class="a" style="left:66px;top:608.5px;width:828px;height:3px;background:#bcc0cc"></div>
<div class="a" style="left:66px;top:611.5px;width:828px;height:16px;background:#dce4f4;border-top:1px solid #f4f6fc;border-bottom:1px solid #aeb2bc"></div>
<div class="a" style="left:66px;top:627.5px;width:828px;height:2px;background:#e4e8f4"></div>
<div class="a" style="left:66px;top:611.5px;width:1px;height:16px;background:#c4c8d4"></div>
<div class="a" style="left:193px;top:612px;width:2px;height:15px;background:#9a9ea8;border-right:1px solid #fff"></div>
<div class="a" style="left:318px;top:612px;width:2px;height:15px;background:#9a9ea8;border-right:1px solid #fff"></div>
<div class="a" style="left:458px;top:612.5px;width:435px;height:14px;background:#fcfbe6"></div>
<div class="a" style="left:456.5px;top:612px;width:2px;height:15px;background:#90949c"></div>
<svg class="a" style="left:0;top:0" width="900" height="667">
<circle cx="76.5" cy="619.5" r="6" fill="#e0e6f8" stroke="#2a2a2a" stroke-width="1.3"/>
</svg>
<div class="a txt" style="left:88px;top:613.5px;color:#222;letter-spacing:-0.5px">3840:-22016:0</div>
<div class="a txt" style="left:197px;top:613.5px;color:#222;letter-spacing:-0.35px">1129 frame points</div>
<div class="a txt" style="left:460px;top:613.5px;color:#222;letter-spacing:-0.4px">Freehand tool. [Ctrl] - Set the Beam</div>
<!-- ok cancel -->
<div class="btn" style="left:743px;top:634px;width:72px;height:24px;border-color:#8c94a8;background:linear-gradient(#fafbff,#e8ebf6 70%,#dfe3f0)"></div>
<div class="btn" style="left:820px;top:634px;width:72px;height:24px;border-color:#8c94a8;background:linear-gradient(#fafbff,#e8ebf6 70%,#dfe3f0)"></div>
<div class="a txt" style="left:771.5px;top:639.5px;font-size:11.5px;color:#7a8294;letter-spacing:-0.3px">OK</div>
<div class="a txt" style="left:840.5px;top:639.5px;font-size:11.5px;color:#444c5e;letter-spacing:-0.55px">Cancel</div>

</body></html>
